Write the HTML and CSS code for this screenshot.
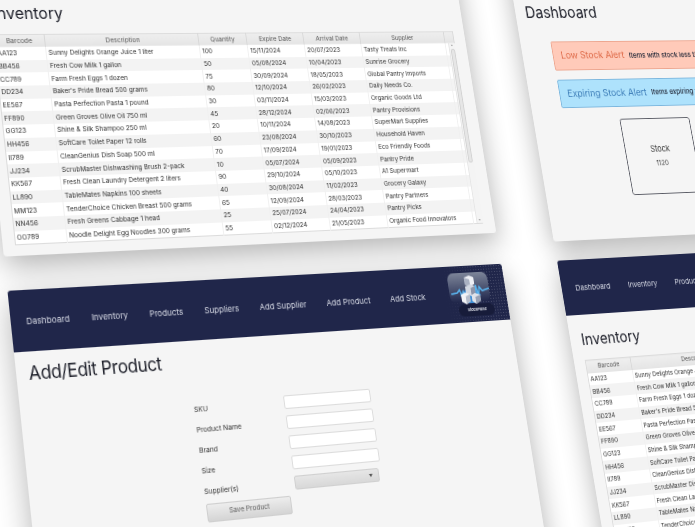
FILE: index.html
```html
<!DOCTYPE html>
<html lang="en">
<head>
<meta charset="utf-8">
<title>StockPulse</title>
<link rel="stylesheet" href="styles.css">
</head>
<body>
<main class="scene">

  <section class="window win-inv-top">
    <div class="content">
      <h1 class="title">Inventory</h1>
      <div class="table-wrap">
        <table class="grid">
          <colgroup><col class="c1"><col class="c2"><col class="c3"><col class="c4"><col class="c5"><col class="c6"><col class="c7"></colgroup>
          <thead><tr><th>Barcode</th><th>Description</th><th>Quantity</th><th>Expire Date</th><th>Arrival Date</th><th>Supplier</th><th></th></tr></thead>
          <tbody>
            <tr><td>AA123</td><td>Sunny Delights Orange Juice 1 liter</td><td>100</td><td>15/11/2024</td><td>20/07/2023</td><td>Tasty Treats Inc</td><td></td></tr>
            <tr><td>BB456</td><td>Fresh Cow Milk 1 gallon</td><td>50</td><td>05/08/2024</td><td>10/04/2023</td><td>Sunrise Grocery</td><td></td></tr>
            <tr><td>CC789</td><td>Farm Fresh Eggs 1 dozen</td><td>75</td><td>30/09/2024</td><td>18/05/2023</td><td>Global Pantry Imports</td><td></td></tr>
            <tr><td>DD234</td><td>Baker's Pride Bread 500 grams</td><td>80</td><td>12/10/2024</td><td>26/02/2023</td><td>Daily Needs Co.</td><td></td></tr>
            <tr><td>EE567</td><td>Pasta Perfection Pasta 1 pound</td><td>30</td><td>03/11/2024</td><td>15/03/2023</td><td>Organic Goods Ltd</td><td></td></tr>
            <tr><td>FF890</td><td>Green Groves Olive Oil 750 ml</td><td>45</td><td>28/12/2024</td><td>02/06/2023</td><td>Pantry Provisions</td><td></td></tr>
            <tr><td>GG123</td><td>Shine &amp; Silk Shampoo 250 ml</td><td>20</td><td>10/11/2024</td><td>14/08/2023</td><td>SuperMart Supplies</td><td></td></tr>
            <tr><td>HH456</td><td>SoftCare Toilet Paper 12 rolls</td><td>60</td><td>23/08/2024</td><td>30/10/2023</td><td>Household Haven</td><td></td></tr>
            <tr><td>II789</td><td>CleanGenius Dish Soap 500 ml</td><td>70</td><td>17/09/2024</td><td>19/01/2023</td><td>Eco Friendly Foods</td><td></td></tr>
            <tr><td>JJ234</td><td>ScrubMaster Dishwashing Brush 2-pack</td><td>10</td><td>05/07/2024</td><td>05/09/2023</td><td>Pantry Pride</td><td></td></tr>
            <tr><td>KK567</td><td>Fresh Clean Laundry Detergent 2 liters</td><td>90</td><td>29/10/2024</td><td>05/10/2023</td><td>A1 Supermart</td><td></td></tr>
            <tr><td>LL890</td><td>TableMates Napkins 100 sheets</td><td>40</td><td>30/08/2024</td><td>11/02/2023</td><td>Grocery Galaxy</td><td></td></tr>
            <tr><td>MM123</td><td>TenderChoice Chicken Breast 500 grams</td><td>65</td><td>12/09/2024</td><td>28/03/2023</td><td>Pantry Partners</td><td></td></tr>
            <tr><td>NN456</td><td>Fresh Greens Cabbage 1 head</td><td>25</td><td>25/07/2024</td><td>24/04/2023</td><td>Pantry Picks</td><td></td></tr>
            <tr><td>OO789</td><td>Noodle Delight Egg Noodles 300 grams</td><td>55</td><td>02/12/2024</td><td>21/05/2023</td><td>Organic Food Innovators</td><td></td></tr>
          </tbody>
        </table>
        <div class="scrollbar"><div class="thumb"></div></div>
      </div>
    </div>
  </section>

  <section class="window win-dash">
    <div class="content">
      <h1 class="title">Dashboard</h1>
      <div class="alert alert-low"><strong>Low Stock Alert</strong><span>Items with stock less than 10</span></div>
      <div class="alert alert-exp"><strong>Expiring Stock Alert</strong><span>Items expiring within 30 days</span></div>
      <div class="card"><div class="card-name">Stock</div><div class="card-value">1120</div></div>
    </div>
  </section>

  <section class="window win-form">
    <nav class="navbar">
      <a>Dashboard</a><a>Inventory</a><a>Products</a><a>Suppliers</a><a>Add Supplier</a><a>Add Product</a><a>Add Stock</a>
      <div class="logo">
        <svg viewBox="0 0 49 44" width="49" height="44" aria-hidden="true">
          <defs>
            <linearGradient id="lg" x1="0" y1="0" x2="0" y2="1"><stop offset="0" stop-color="#7d8599"/><stop offset="0.6" stop-color="#454d6c"/><stop offset="1" stop-color="#20264a"/></linearGradient>
          </defs>
          <rect x="0" y="0" width="46" height="30" rx="7" fill="url(#lg)"/>
          <rect x="8" y="32" width="41" height="12" rx="6" fill="#171c3a"/>
          <path d="M12 23 L24 13 L36 23 L30 31 L18 31 Z" fill="#3f8fd6"/>
          <polyline points="2,21 9,20 12,17 14,24 16,19 18,26" fill="none" stroke="#5ab4ee" stroke-width="1.6"/>
          <polyline points="46,17 38,19 35,15 33,24 31,13 29,24" fill="none" stroke="#5ab4ee" stroke-width="1.6"/>
          <path d="M19 5 L25 3 L30 5 L30 12 L25 14 L19 12 Z" fill="#eef0f5"/>
          <path d="M19 5 L25 7 L25 14 L19 12 Z" fill="#aab1c2"/>
          <path d="M19 14 L25 12 L30 14 L30 22 L25 24 L19 22 Z" fill="#d3d8e2"/>
          <path d="M25 16 L30 14 L30 22 L25 24 Z" fill="#8d96aa"/>
          <path d="M13 22 L18 20 L23 22 L23 29 L18 32 L13 29 Z" fill="#f2f3f6"/>
          <path d="M18 24 L23 22 L23 29 L18 32 Z" fill="#b6bdcb"/>
          <path d="M25 23 L29 21 L35 23 L35 29 L29 32 L25 29 Z" fill="#dfe3ea"/>
          <path d="M29 25 L35 23 L35 29 L29 32 Z" fill="#98a1b4"/>
          <text class="logo-text" x="29" y="39.5" text-anchor="middle">StockPulse</text>
        </svg>
      </div>
    </nav>
    <div class="content content-form">
      <h1 class="title title-form">Add/Edit Product</h1>
      <form class="form">
        <label class="field-label">SKU</label><div class="input"></div>
        <label class="field-label">Product Name</label><div class="input"></div>
        <label class="field-label">Brand</label><div class="input"></div>
        <label class="field-label">Size</label><div class="input"></div>
        <label class="field-label">Supplier(s)</label><div class="select"><i class="caret"></i></div>
        <div class="button">Save Product</div>
      </form>
    </div>
  </section>

  <section class="window win-inv">
    <nav class="navbar">
      <a>Dashboard</a><a>Inventory</a><a>Products</a><a>Suppliers</a><a>Add Supplier</a><a>Add Product</a><a>Add Stock</a>
    </nav>
    <div class="content content-inv">
      <h1 class="title">Inventory</h1>
      <div class="table-wrap">
        <table class="grid">
          <colgroup><col class="c1"><col class="c2"><col class="c3"><col class="c4"><col class="c5"><col class="c6"><col class="c7"></colgroup>
          <thead><tr><th>Barcode</th><th>Description</th><th>Quantity</th><th>Expire Date</th><th>Arrival Date</th><th>Supplier</th><th></th></tr></thead>
          <tbody>
            <tr><td>AA123</td><td>Sunny Delights Orange Juice 1 liter</td><td>100</td><td>15/11/2024</td><td>20/07/2023</td><td>Tasty Treats Inc</td><td></td></tr>
            <tr><td>BB456</td><td>Fresh Cow Milk 1 gallon</td><td>50</td><td>05/08/2024</td><td>10/04/2023</td><td>Sunrise Grocery</td><td></td></tr>
            <tr><td>CC789</td><td>Farm Fresh Eggs 1 dozen</td><td>75</td><td>30/09/2024</td><td>18/05/2023</td><td>Global Pantry Imports</td><td></td></tr>
            <tr><td>DD234</td><td>Baker's Pride Bread 500 grams</td><td>80</td><td>12/10/2024</td><td>26/02/2023</td><td>Daily Needs Co.</td><td></td></tr>
            <tr><td>EE567</td><td>Pasta Perfection Pasta 1 pound</td><td>30</td><td>03/11/2024</td><td>15/03/2023</td><td>Organic Goods Ltd</td><td></td></tr>
            <tr><td>FF890</td><td>Green Groves Olive Oil 750 ml</td><td>45</td><td>28/12/2024</td><td>02/06/2023</td><td>Pantry Provisions</td><td></td></tr>
            <tr><td>GG123</td><td>Shine &amp; Silk Shampoo 250 ml</td><td>20</td><td>10/11/2024</td><td>14/08/2023</td><td>SuperMart Supplies</td><td></td></tr>
            <tr><td>HH456</td><td>SoftCare Toilet Paper 12 rolls</td><td>60</td><td>23/08/2024</td><td>30/10/2023</td><td>Household Haven</td><td></td></tr>
            <tr><td>II789</td><td>CleanGenius Dish Soap 500 ml</td><td>70</td><td>17/09/2024</td><td>19/01/2023</td><td>Eco Friendly Foods</td><td></td></tr>
            <tr><td>JJ234</td><td>ScrubMaster Dishwashing Brush 2-pack</td><td>10</td><td>05/07/2024</td><td>05/09/2023</td><td>Pantry Pride</td><td></td></tr>
            <tr><td>KK567</td><td>Fresh Clean Laundry Detergent 2 liters</td><td>90</td><td>29/10/2024</td><td>05/10/2023</td><td>A1 Supermart</td><td></td></tr>
            <tr><td>LL890</td><td>TableMates Napkins 100 sheets</td><td>40</td><td>30/08/2024</td><td>11/02/2023</td><td>Grocery Galaxy</td><td></td></tr>
            <tr><td>MM123</td><td>TenderChoice Chicken Breast 500 grams</td><td>65</td><td>12/09/2024</td><td>28/03/2023</td><td>Pantry Partners</td><td></td></tr>
          </tbody>
        </table>
      </div>
    </div>
  </section>

</main>
</body>
</html>
```
FILE: styles.css
```css
* { box-sizing: border-box; }

html, body {
  margin: 0;
  width: 695px;
  height: 527px;
  overflow: hidden;
  background: #fff;
}

body {
  font-family: Inter, "Liberation Sans", sans-serif;
  color: #333;
}

/* The whole mock-up is one tilted plane; windows sit on it freely. */
.scene {
  position: absolute;
  left: 0;
  top: 0;
  width: 900px;
  height: 700px;
  transform-origin: 0 0;
  transform: matrix3d(1, 0, 0, 0.000188, 0.1077, 1, 0, -0.0001175, 0, 0, 1, 0, 0, 0, 0, 1);
  filter: blur(0.55px);
}

.window {
  position: absolute;
  background: #f5f5f5;
  border-radius: 3px;
  box-shadow: 0 10px 30px rgba(0, 0, 0, 0.3);
  overflow: hidden;
}

.win-inv-top { left: -23px; top: -40px; width: 525px; height: 288px; }
.win-dash    { left: 568px; top: -40px; width: 420px; height: 300px; }
.win-form    { left: -23px; top: 280px; width: 525px; height: 420px; }
.win-inv     { left: 568px; top: 280px; width: 525px; height: 420px; }

.content { padding: 41.5px 13px 0; }
.win-dash .content { padding-top: 43px; }
.content-form { padding: 9px 13px 0; }
.content-inv { padding: 14px 13px 0; }

.title {
  margin: 0;
  font-size: 17.3px;
  line-height: 22px;
  font-weight: 400;
  color: #20222c;
}

.win-inv-top .title { font-size: 16px; margin-left: 1px; }
.win-inv .title { font-size: 16px; }
.win-dash .title { margin-left: -1px; }

/* Navigation */
.navbar {
  display: flex;
  align-items: center;
  gap: 21.7px;
  height: 57px;
  padding: 0 0 0 15px;
  background: #20264a;
}

.win-inv .navbar { padding-left: 16.5px; }

.navbar a {
  font-size: 8.2px;
  color: #d6d9e4;
  white-space: nowrap;
}

.logo {
  position: relative;
  margin-left: auto;
  width: 90px;
  height: 57px;
  display: flex;
  align-items: center;
  justify-content: flex-end;
  padding-right: 16px;
}

.logo::before {
  content: "";
  position: absolute;
  inset: 0;
  background-image: radial-gradient(rgba(255, 255, 255, 0.2) 0.45px, transparent 0.7px);
  background-size: 3px 3px;
  -webkit-mask-image: linear-gradient(to right, transparent, #000 70%);
  mask-image: linear-gradient(to right, transparent, #000 70%);
}

.logo svg { position: relative; }

.logo-text {
  font-size: 4px;
  font-weight: 600;
  fill: #e8ebf2;
}

/* Table */
.table-wrap {
  position: relative;
  margin-top: 10px;
}

.win-inv-top .table-wrap { margin-left: -1.5px; width: 500px; }

.grid {
  width: 499px;
  table-layout: fixed;
  border-collapse: collapse;
  border: 1px solid #dcdcdc;
  font-size: 6.6px;
}

.c1 { width: 51.5px; }
.c2 { width: 160px; }
.c3 { width: 52px; }
.c4 { width: 63px; }
.c5 { width: 64px; }
.c6 { width: 98px; }
.c7 { width: 10.5px; }

.win-inv .c1 { width: 53.5px; }

.grid th {
  height: 13px;
  padding: 0;
  font-weight: 400;
  color: #555;
  text-align: center;
  background: linear-gradient(#efefef, #e4e4e4);
  border-right: 1px solid #d8d8d8;
}

.grid td {
  height: 12.7px;
  padding: 0 2px;
  color: #303030;
  background: #fff;
  border-right: 1px solid #f0f0f0;
  white-space: nowrap;
  overflow: hidden;
}

.grid tbody tr:nth-child(even) td { background: #f3f3f3; }

.scrollbar {
  position: absolute;
  right: 0;
  top: 13px;
  bottom: 1px;
  width: 8px;
  padding: 6px 1px;
  background: #f4f4f4;
  border-left: 1px solid #e6e6e6;
}

.scrollbar::before,
.scrollbar::after {
  content: "";
  position: absolute;
  left: 2px;
  border: 1.5px solid transparent;
}

.scrollbar::before { top: 1.5px; border-bottom: 2px solid #9a9a9a; border-top: 0; }
.scrollbar::after { bottom: 1.5px; border-top: 2px solid #9a9a9a; border-bottom: 0; }

.thumb {
  height: 121px;
  background: #e6e6e6;
  border: 1px solid #d2d2d2;
  border-radius: 2px;
}

/* Dashboard */
.alert {
  display: flex;
  align-items: center;
  gap: 6px;
  height: 31.5px;
  width: 380px;
  padding: 0 9px;
  margin-left: 24px;
  border-radius: 2px;
  border: 1px solid;
  white-space: nowrap;
}

.alert strong { font-size: 10.7px; font-weight: 400; }
.alert span { font-size: 8px; font-weight: 500; color: #222838; }

.alert-low { margin-top: 21px; background: #ffcab9; border-color: #eda68f; }
.alert-low strong { color: #df6a48; }
.alert-exp { margin-top: 10px; background: #aee2fc; border-color: #7db7de; }
.alert-exp strong { color: #3f7fb9; }

.card {
  display: flex;
  flex-direction: column;
  align-items: center;
  justify-content: center;
  gap: 6px;
  width: 89px;
  height: 83px;
  margin: 12.5px 0 0 93px;
  border: 1.5px solid #5b5d66;
  border-radius: 3px;
}

.card-name { font-size: 9.2px; color: #333; }
.card-value { font-size: 7.5px; color: #444; }

/* Form */
.title-form {
  font-size: 17px;
  letter-spacing: -0.35px;
  margin-left: -1px;
}

.form {
  display: grid;
  grid-template-columns: 93px 93px;
  grid-auto-rows: 12.5px;
  row-gap: 6.5px;
  margin: 27px 0 0 157px;
}

.field-label {
  align-self: center;
  font-size: 6.8px;
  color: #333;
}

.input {
  background: #fff;
  border: 1px solid #dcdcdc;
  border-radius: 2px;
}

.select {
  position: relative;
  width: 90px;
  background: linear-gradient(#e6e6e6, #d8d8d8);
  border: 1px solid #d0d0d0;
  border-radius: 2px;
}

.caret {
  position: absolute;
  right: 6px;
  top: 4px;
  border: 2px solid transparent;
  border-top: 3px solid #555;
  border-bottom: 0;
}

.button {
  display: flex;
  align-items: center;
  justify-content: center;
  width: 87px;
  height: 17px;
  margin-top: -1.5px;
  font-size: 6.6px;
  color: #5f5f5f;
  background: linear-gradient(#ededed, #d4d4d4);
  border: 1px solid #cfcfcf;
  border-radius: 2px;
}
```
